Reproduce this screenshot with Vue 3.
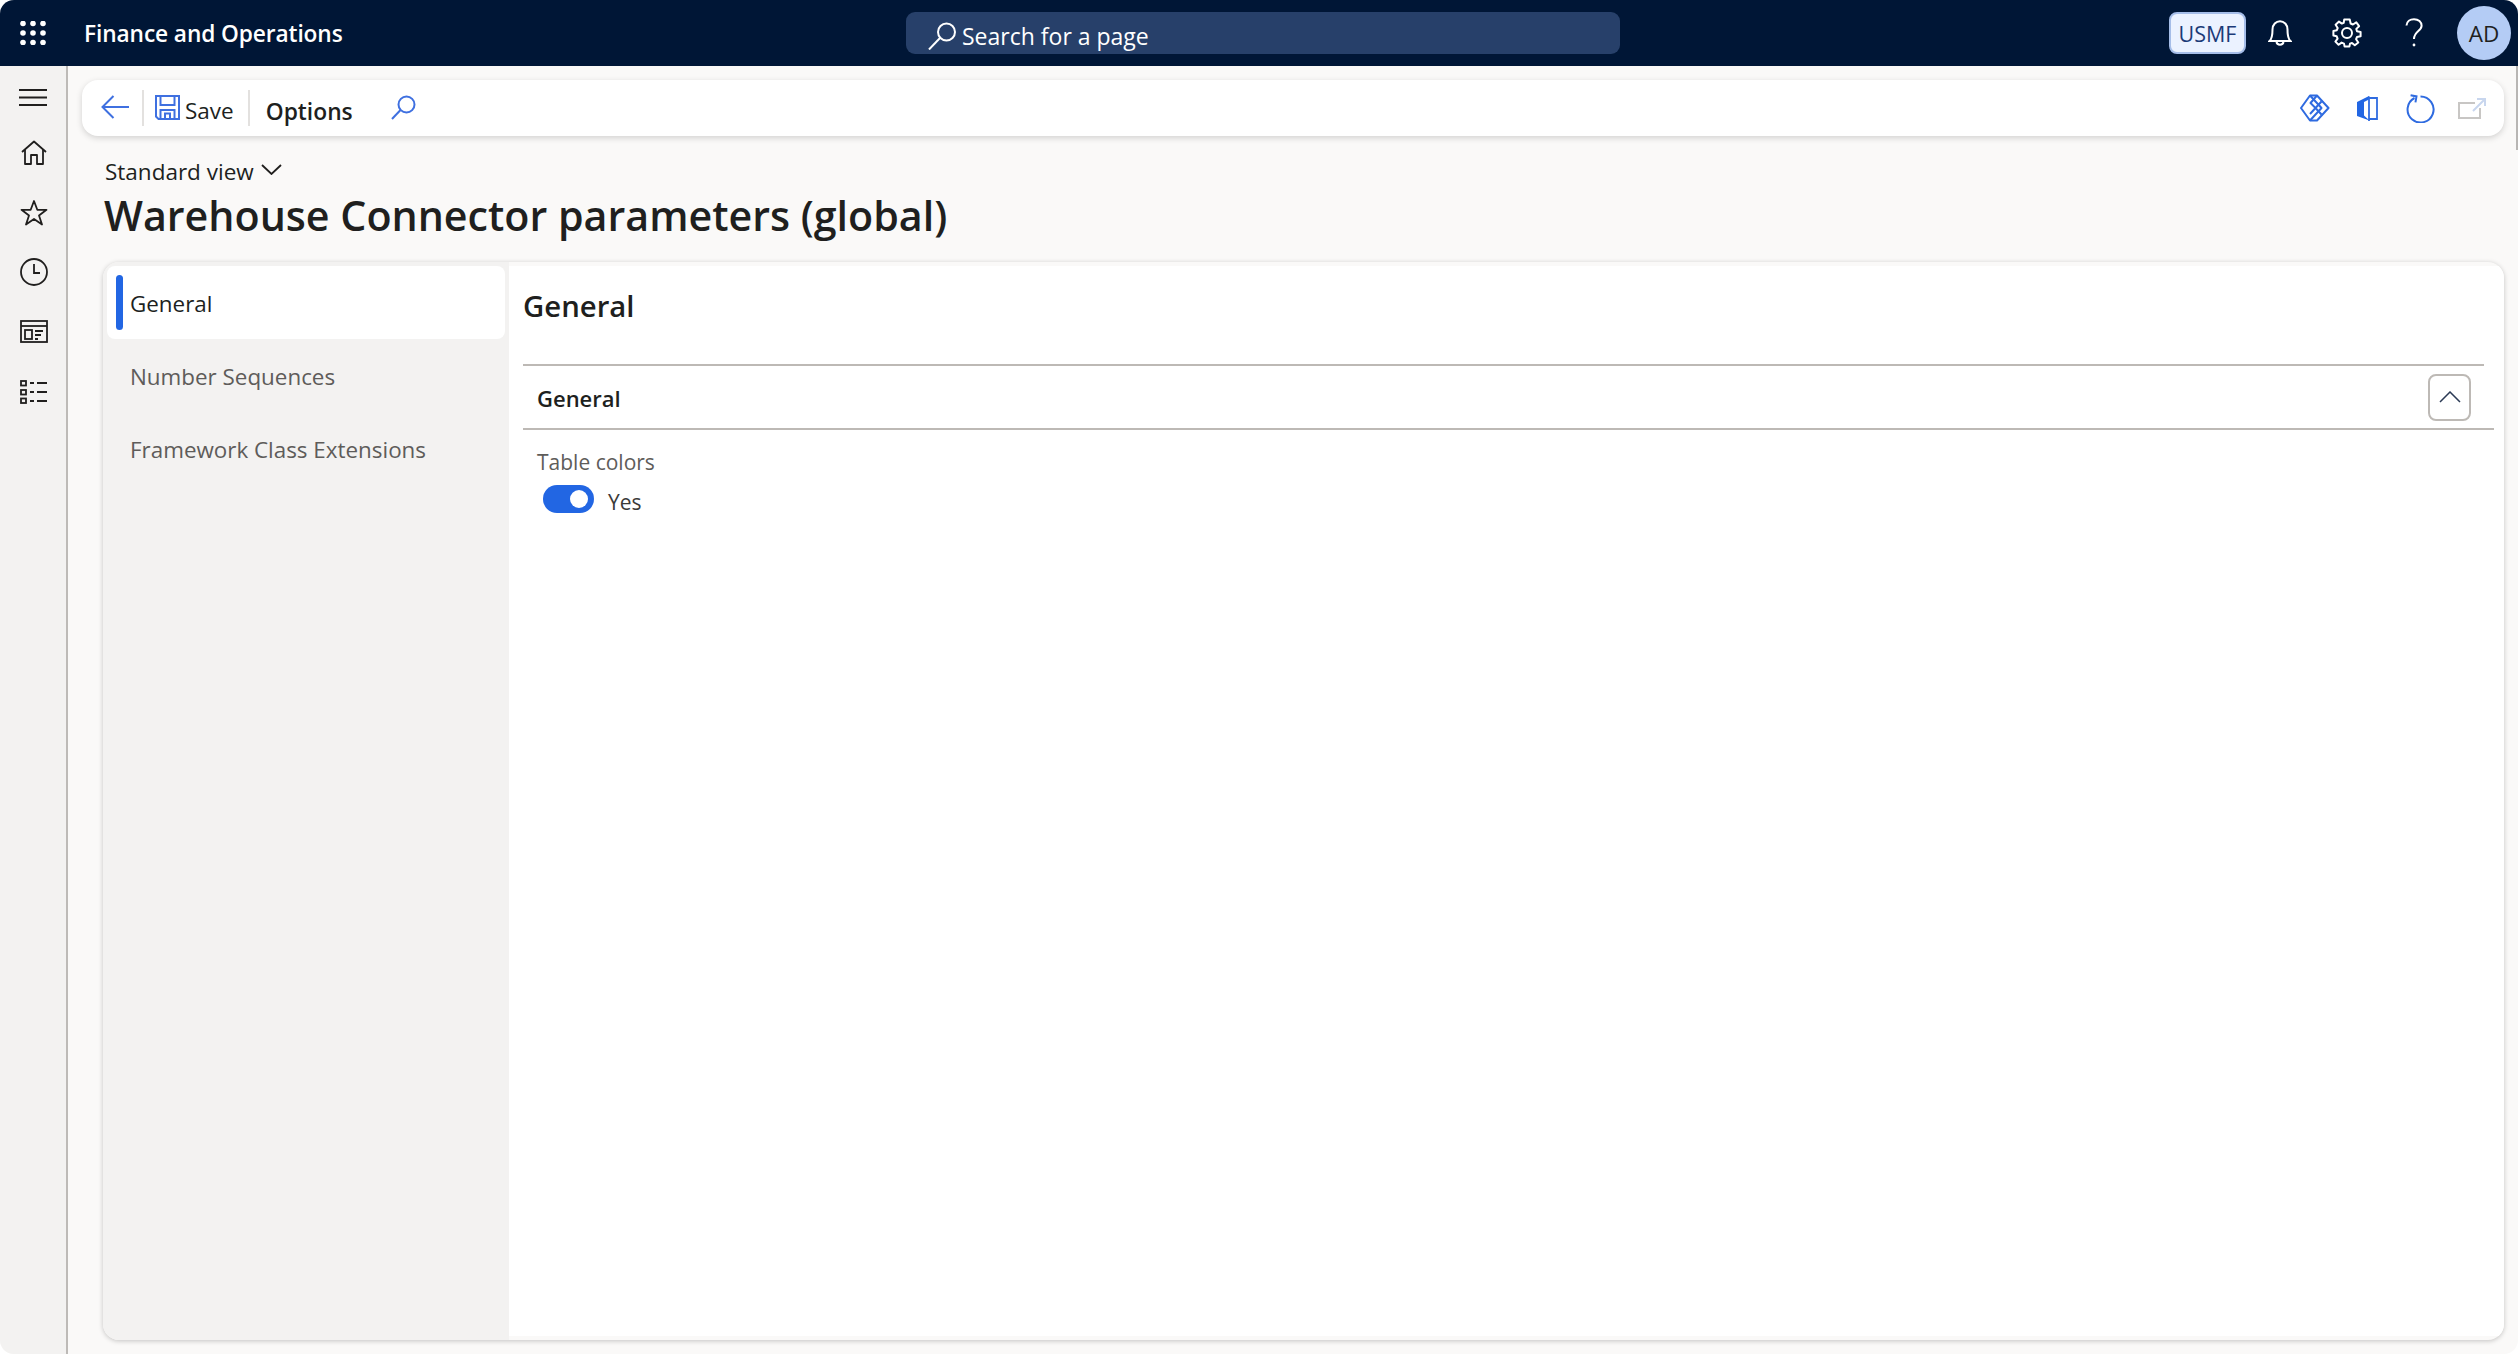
<script setup>
const navTabs = [
  { label: 'General', active: true },
  { label: 'Number Sequences', active: false },
  { label: 'Framework Class Extensions', active: false },
]
</script>

<template>
  <div class="app">
    <header class="topbar">
      <div class="top-left">
        <svg class="waffle" width="26" height="24" viewBox="0 0 26 24" fill="#fff">
          <circle cx="3" cy="2.5" r="2.8"/><circle cx="13" cy="2.5" r="2.8"/><circle cx="23" cy="2.5" r="2.8"/>
          <circle cx="3" cy="12" r="2.8"/><circle cx="13" cy="12" r="2.8"/><circle cx="23" cy="12" r="2.8"/>
          <circle cx="3" cy="21.5" r="2.8"/><circle cx="13" cy="21.5" r="2.8"/><circle cx="23" cy="21.5" r="2.8"/>
        </svg>
        <span class="app-name">Finance and Operations</span>
      </div>
      <div class="searchbox">
        <svg width="30" height="28" viewBox="0 0 30 28" fill="none" stroke="#fff" stroke-width="2">
          <circle cx="19.5" cy="10" r="8.5"/><path d="M13 16 L2 27.5"/>
        </svg>
        <span class="search-text">Search for a page</span>
      </div>
      <div class="top-right">
        <div class="company">USMF</div>
        <div class="top-icon">
          <svg width="24" height="26" viewBox="0 0 24 26" fill="none" stroke="#fff" stroke-width="2">
            <path d="M1.5 21 H22.5 C20 19 19.5 16.5 19.5 9.5 C19.5 4.5 16 1.2 12 1.2 C8 1.2 4.5 4.5 4.5 9.5 C4.5 16.5 4 19 1.5 21 Z"/>
            <path d="M8.5 22 C9 25.5 15 25.5 15.5 22"/>
          </svg>
        </div>
        <div class="top-icon">
          <svg width="30" height="30" viewBox="0 0 30 30" fill="none" stroke="#fff" stroke-width="2" stroke-linejoin="round">
            <circle cx="15" cy="15" r="5"/>
            <path d="M12.2 1.6 H17.8 L18.6 5.5 L20.9 6.5 L24.3 4.3 L27.1 8.2 L24.3 10.9 L25 13.2 L28.6 13.9 V18.2 L25 19 L24.1 21.2 L26.3 24.5 L22.8 27.3 L20 25 L18 25.6 L17.4 28.6 H12.6 L12 25.6 L9.6 24.6 L6.6 26.8 L3.4 23.6 L5.6 20.6 L4.7 18.3 L1.4 17.6 V13 L4.8 12.2 L5.7 10 L3.6 6.8 L7 3.6 L9.9 5.6 L11.7 4.9 Z"/>
          </svg>
        </div>
        <div class="top-icon">
          <svg width="18" height="30" viewBox="0 0 18 30" fill="none" stroke="#fff" stroke-width="2">
            <path d="M1.5 7.5 C1.8 3.5 5 1.2 9 1.2 C13.5 1.2 16.6 4 16.6 7.8 C16.6 13 9 13.5 9 21"/>
            <circle cx="9" cy="27" r="1.4" fill="#fff" stroke="none"/>
          </svg>
        </div>
        <div class="avatar">AD</div>
      </div>
    </header>

    <div class="body-row">
      <nav class="leftnav">
        <svg class="nav-i" width="28" height="17" viewBox="0 0 28 17" stroke="#201f1e" stroke-width="2"><path d="M0 1H28M0 8.500H28M0 16H28"/></svg>
        <svg class="nav-i" width="26" height="25" viewBox="0 0 26 25" fill="none" stroke="#201f1e" stroke-width="1.800" stroke-linejoin="round"><path d="M1 12 L13 1.500 L25 12"/><path d="M4 10 V24 H10 V15 H16 V24 H22 V10"/></svg>
        <svg class="nav-i" width="28" height="27" viewBox="0 0 28 27" fill="none" stroke="#201f1e" stroke-width="1.800" stroke-linejoin="round"><path d="M14 2 L17.300 10.800 L26.500 10.800 L19 16.500 L22 25.500 L14 20 L6 25.500 L9 16.500 L1.500 10.800 L10.700 10.800 Z"/></svg>
        <svg class="nav-i" width="28" height="28" viewBox="0 0 28 28" fill="none" stroke="#201f1e" stroke-width="1.800"><circle cx="14" cy="14" r="13"/><path d="M14 6 V15 H20"/></svg>
        <svg class="nav-i" width="28" height="23" viewBox="0 0 28 23" fill="none" stroke="#201f1e" stroke-width="1.800"><rect x="1" y="1" width="26" height="21"/><path d="M1 6H27"/><rect x="5" y="10" width="7" height="9"/><path d="M15 11H23M15 15H21M15 19H18"/></svg>
        <svg class="nav-i" width="27" height="24" viewBox="0 0 27 24" fill="none" stroke="#201f1e" stroke-width="1.800"><rect x="1" y="1" width="5" height="4.500"/><rect x="1" y="10" width="5" height="4.500"/><rect x="1" y="18.500" width="5" height="4.500"/><path d="M10 3H14M17 3H27M10 12H14M17 12H27M10 21H14M17 21H27"/></svg>
      </nav>

      <main class="content">
        <div class="toolbar">
          <svg class="tb-back" width="28" height="24" viewBox="0 0 28 24" fill="none" stroke="#3f70e0" stroke-width="2"><path d="M12.500 1 L1.500 12 L12.500 23 M1.500 12 H28"/></svg>
          <span class="tb-sep"></span>
          <svg class="tb-save" width="25" height="25" viewBox="0 0 25 25" fill="none" stroke="#3f70e0" stroke-width="2"><path d="M1 1 H24 V24 H3.500 L1 21.500 Z"/><path d="M5.500 1 V10 H19.500 V1"/><path d="M5.500 24 V15 H19.500 V24"/><path d="M10 24 V18.500 H15 V24"/></svg>
          <span class="tb-save-label">Save</span>
          <span class="tb-sep second"></span>
          <span class="tb-options">Options</span>
          <svg class="tb-find" width="25" height="25" viewBox="0 0 25 25" fill="none" stroke="#3f70e0" stroke-width="2"><circle cx="15.500" cy="9.500" r="8"/><path d="M9.500 15 L1 24"/></svg>
          <div class="tb-right">
            <svg class="tb-r diamond" width="30" height="28" viewBox="0 0 30 28" fill="none" stroke="#2f6be0" stroke-width="2" stroke-linejoin="round"><path d="M1 14 L10 1.500 H17 L28.500 14 L17 26.500 H10 Z"/><path d="M10 1.500 L21.500 14 L10 26.500"/><path d="M17 1.500 L10.500 9 L15.500 14 L10 20"/><path d="M15.500 14 L21.500 20.500 M21.500 7.500 L15.500 14"/></svg>
            <svg class="tb-r office" width="21" height="27" viewBox="0 0 21 27"><path d="M0 7 L12 1 V4.500 L7 7 V20.500 L12.500 25.500 L0 21 Z" fill="#2266e3"/><path d="M12 1.500 V26 M12 3 H20 V24 H12" fill="none" stroke="#2f6be0" stroke-width="1.800"/></svg>
            <svg class="tb-r refresh" width="29" height="29" viewBox="0 0 29 29" fill="none" stroke="#2f6be0" stroke-width="2"><path d="M8.500 4 A13 13 0 1 0 14.500 2.500"/><path d="M4 2 H10 V8" transform="rotate(10 8 5)"/></svg>
            <svg class="tb-r open" width="28" height="21" viewBox="0 0 28 21" fill="none" stroke="#c8c6c4" stroke-width="2"><path d="M17 5 H1 V20 H22 V10"/><path d="M15 13 L26.500 1.500 M19 1 H27 V8" stroke="#c8d6ee"/></svg>
          </div>
        </div>

        <div class="page-head">
          <div class="view-select">
            <span>Standard view</span>
            <svg width="21" height="11" viewBox="0 0 21 11" fill="none" stroke="#201f1e" stroke-width="1.800"><path d="M1 1 L10.500 10 L20 1"/></svg>
          </div>
          <h1 class="page-title">Warehouse Connector parameters (global)</h1>
        </div>

        <section class="card">
          <aside class="tabs">
            <div v-for="t in navTabs" :key="t.label" class="tab" :class="{ active: t.active }">
              <span v-if="t.active" class="tab-bar"></span>
              <span>{{ t.label }}</span>
            </div>
          </aside>
          <div class="panel">
            <h2 class="panel-title">General</h2>
            <div class="fasttab">
              <span class="fasttab-title">General</span>
              <button class="collapse" type="button">
                <svg width="22" height="12" viewBox="0 0 22 12" fill="none" stroke="#2b3a55" stroke-width="1.500"><path d="M1 11 L11 1 L21 11"/></svg>
              </button>
            </div>
            <div class="field">
              <div class="field-label">Table colors</div>
              <div class="field-value">
                <span class="toggle"><span class="knob"></span></span>
                <span class="yes">Yes</span>
              </div>
            </div>
          </div>
        </section>
      </main>
    </div>
    <span class="scroll-thumb"></span>
  </div>
</template>

<style>
html, body { margin: 0; background: #fff; }
</style>

<style scoped>
.app {
  position: relative;
  height: 100vh;
  display: flex;
  flex-direction: column;
  overflow: hidden;
  border-radius: 14px;
  background: #faf9f8;
  font-family: "Open Sans", "Noto Sans", sans-serif;
  color: #201f1e;
}
.topbar {
  height: 66px;
  flex: none;
  display: flex;
  align-items: center;
  background: #001636;
  color: #fff;
}
.top-left { width: 906px; display: flex; align-items: center; padding-left: 20px; box-sizing: border-box; }
.app-name { margin-left: 38px; font-size: 22.700px; font-weight: 600; letter-spacing: -0.1px; }
.searchbox {
  width: 714px;
  height: 42px;
  box-sizing: border-box;
  padding: 6px 0 0 21px;
  display: flex;
  align-items: center;
  gap: 5px;
  background: #27406a;
  border-radius: 9px;
}
.search-text { font-size: 23px; line-height: 28px; }
.top-right { flex: 1; display: flex; align-items: center; padding-left: 549px; }
.company {
  width: 77px;
  height: 42px;
  flex: none;
  box-sizing: border-box;
  display: flex;
  align-items: center;
  justify-content: center;
  background: #ebf2ff;
  border: 2px solid #a5bde8;
  border-radius: 8px;
  color: #1b3a78;
  font-size: 21.500px;
}
.top-icon { width: 67px; flex: none; display: flex; justify-content: center; align-items: center; }
.avatar {
  width: 54px;
  height: 54px;
  flex: none;
  margin-left: 10px;
  border-radius: 50%;
  background: #b4ccf5;
  display: flex;
  align-items: center;
  justify-content: center;
  font-size: 22.500px;
  color: #201f1e;
}
.body-row { flex: 1; display: flex; min-height: 0; }
.leftnav {
  width: 68px;
  flex: none;
  box-sizing: border-box;
  background: #f3f2f1;
  border-right: 2px solid #bdbab7;
  display: flex;
  flex-direction: column;
  align-items: flex-start;
  padding-left: 20px;
}
.nav-i { display: block; }
.nav-i:nth-child(1) { margin-top: 23px; margin-left: -1px; }
.nav-i:nth-child(2) { margin-top: 34px; margin-left: 1px; }
.nav-i:nth-child(3) { margin-top: 34px; }
.nav-i:nth-child(4) { margin-top: 32px; }
.nav-i:nth-child(5) { margin-top: 34px; }
.nav-i:nth-child(6) { margin-top: 37px; }
.content { flex: 1; min-width: 0; display: flex; flex-direction: column; padding: 14px; box-sizing: border-box; }
.toolbar {
  height: 56px;
  flex: none;
  display: flex;
  align-items: center;
  background: #fff;
  border-radius: 16px;
  box-shadow: 0 2px 6px rgba(0, 0, 0, 0.16);
  padding-left: 19px;
}
.tb-back { flex: none; margin-top: -2px; }
.tb-sep { width: 2px; height: 36px; background: #e3e1df; margin-left: 13px; flex: none; }
.tb-save { margin-left: 11px; margin-top: -2px; flex: none; }
.tb-save-label { margin-left: 5px; font-size: 22.500px; margin-top: 5px; }
.tb-sep.second { margin-left: 14px; }
.tb-options { margin-left: 16px; font-size: 22.800px; font-weight: 600; margin-top: 6px; }
.tb-find { margin-left: 38px; margin-top: -2px; flex: none; }
.tb-right { margin-left: auto; display: flex; align-items: center; padding-right: 18px; }
.tb-r { flex: none; display: block; }
.tb-r.office { margin-left: 27px; }
.tb-r.refresh { margin-left: 28px; }
.tb-r.open { margin-left: 23px; }
.page-head { padding-left: 22px; height: 126px; flex: none; box-sizing: border-box; padding-top: 21px; }
.view-select { display: flex; align-items: center; gap: 7px; font-size: 22.500px; line-height: 30px; padding-left: 1px; }
.view-select svg { margin-top: -5px; }
.page-title { margin: 1px 0 0; font-size: 41.200px; line-height: 54px; font-weight: 600; letter-spacing: 0; }
.card {
  flex: 1;
  min-height: 0;
  margin-left: 21px;
  display: flex;
  background: #faf9f8;
  border-radius: 16px;
  overflow: hidden;
  box-shadow: 0 1px 5px rgba(0, 0, 0, 0.22);
}
.tabs {
  width: 406px;
  flex: none;
  box-sizing: border-box;
  background: #f3f2f1;
  padding: 4px 4px 0 4px;
}
.tab {
  position: relative;
  height: 73px;
  display: flex;
  align-items: center;
  padding-left: 23px;
  font-size: 22.400px;
  color: #5e5c5a;
  border-radius: 8px;
}
.tab > span:last-child { margin-top: 1px; }
.tab.active { background: #fff; color: #201f1e; }
.tab-bar {
  position: absolute;
  left: 9px;
  top: 9px;
  width: 7px;
  height: 55px;
  border-radius: 4px;
  background: #2266e3;
}
.panel {
  flex: 1;
  min-width: 0;
  background: #fff;
  margin: 4px 0;
  box-sizing: border-box;
  padding: 0 10px 0 14px;
}
.panel-title { margin: 0; height: 98px; box-sizing: border-box; padding-top: 20px; font-size: 29.300px; line-height: 40px; font-weight: 600; }
.fasttab {
  height: 66px;
  box-sizing: border-box;
  border-top: 2px solid #bdb9b5;
  border-bottom: 2px solid #bdb9b5;
  display: flex;
  align-items: center;
  padding: 0 23px 0 14px;
  position: relative;
}
.fasttab::before {
  content: "";
  position: absolute;
  right: 0;
  top: -2px;
  width: 10px;
  height: 2px;
  background: #fff;
}
.fasttab-title { font-size: 22px; font-weight: 600; margin-top: 1px; }
.collapse {
  margin-left: auto;
  width: 43px;
  height: 47px;
  box-sizing: border-box;
  border: 2px solid #bdb9b5;
  border-radius: 8px;
  background: #fff;
  padding: 0;
  display: flex;
  align-items: center;
  justify-content: center;
}
.field { padding: 17px 0 0 14px; }
.field-label { font-size: 21px; line-height: 30px; color: #5e5c5a; }
.field-value { display: flex; align-items: flex-start; margin-top: 8px; padding-left: 6px; }
.toggle {
  width: 51px;
  height: 28px;
  border-radius: 14px;
  background: #2266e3;
  position: relative;
  flex: none;
}
.knob {
  position: absolute;
  right: 6px;
  top: 5px;
  width: 18px;
  height: 18px;
  border-radius: 50%;
  background: #fff;
}
.yes { margin-left: 14px; font-size: 21px; line-height: 28px; color: #3b3a39; margin-top: 3px; }
.scroll-thumb {
  position: absolute;
  right: 0;
  top: 66px;
  width: 2px;
  height: 84px;
  background: #b8b6b4;
}
</style>
